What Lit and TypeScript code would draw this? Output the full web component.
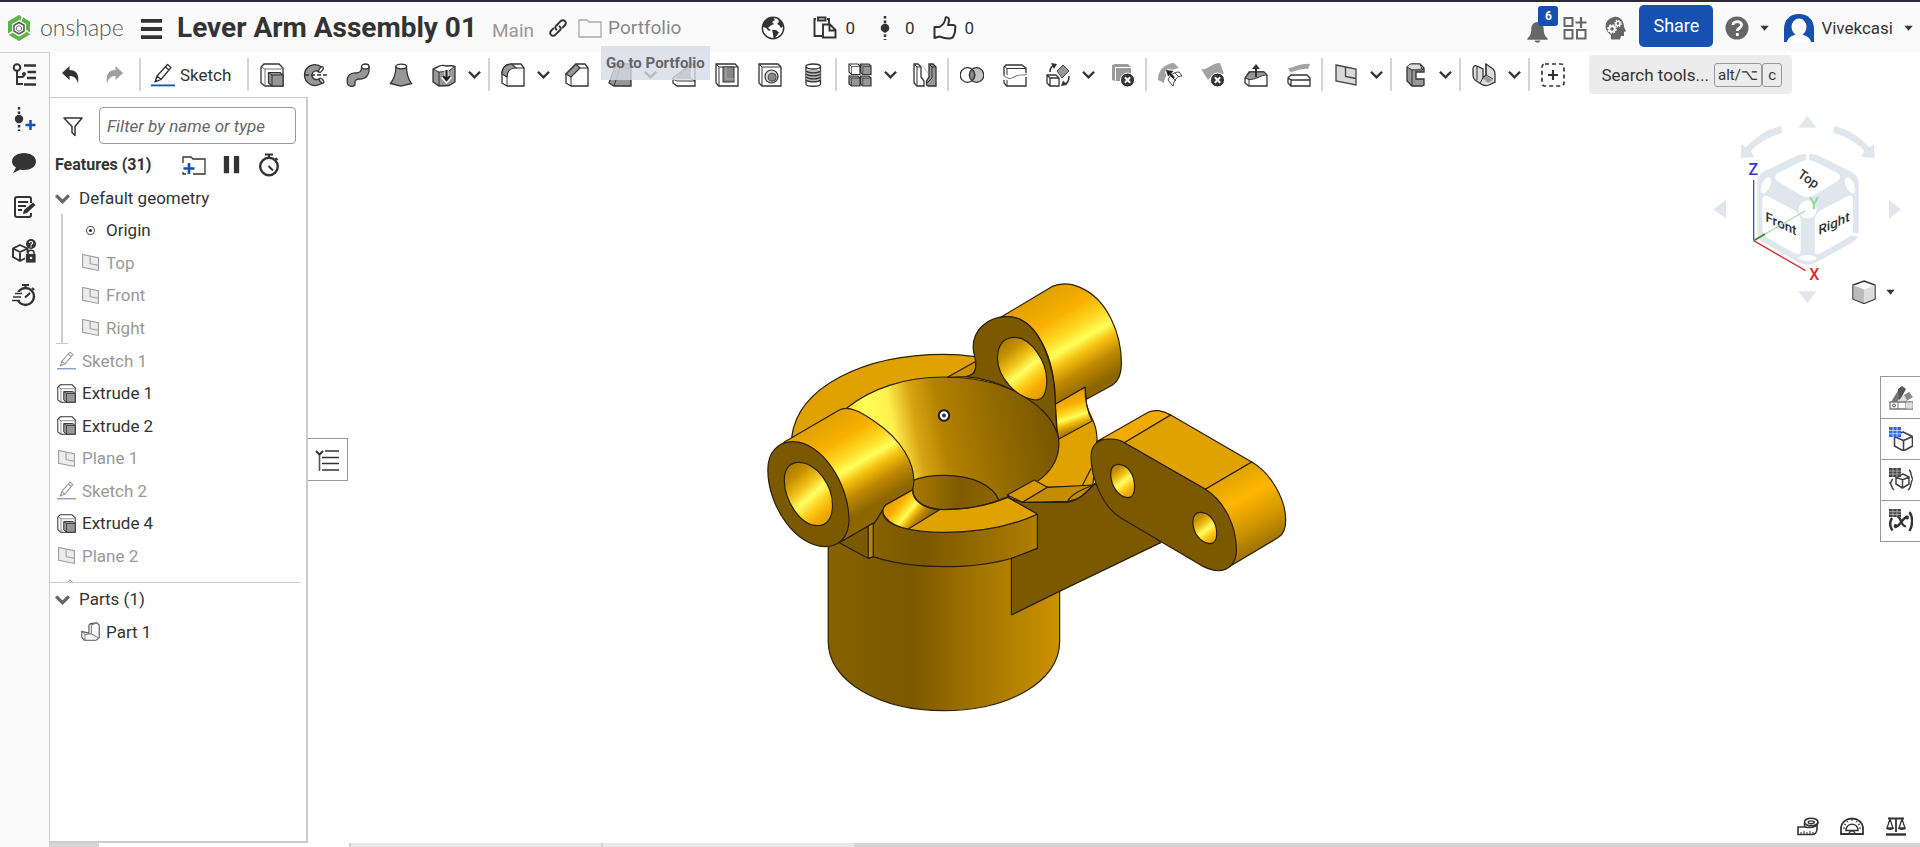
import { LitElement, html, svg, css, type TemplateResult } from "lit";
import { customElement, property } from "lit/decorators.js";
import { classMap } from "lit/directives/class-map.js";

const G = "#979797";
const K = "#333";

const plane = (stroke: string, fill: string) => svg`
  <path d="M2 2 L22 6 V22 L2 18Z" fill=${fill} stroke=${stroke} stroke-width="1.3"/>
  <path d="M11.5 4 V13.500 L22 15.500" fill="none" stroke=${stroke} stroke-width="1.3"/>`;

const pencil = (stroke: string, line: string) => svg`
  <path d="M4 19 L6 13 L16.500 1.500 L20 4.500 L10 16.500Z M6 13 L10 16.500 M14.500 4 L18 7" fill="#fff" stroke=${stroke} stroke-width="1.3" stroke-linejoin="round"/>
  <path d="M4 19 L5 16.200 L6.700 17.700Z" fill=${stroke}/>
  <rect x="0" y="21.500" width="24" height="1.800" fill=${line}/>`;

const ICONS: Record<string, TemplateResult> = {
  undo: svg`<path d="M3 10 L10.500 3 V7 C17 7 20.500 11 19 20.500 C17.500 15 15 13 10.500 13 V17Z" fill="#333"/>`,
  redo: svg`<path d="M21 10 L13.500 3 V7 C7 7 3.500 11 5 20.500 C6.500 15 9 13 13.500 13 V17Z" fill="#a0a0a0"/>`,
  sketch: pencil(K, "#164fae"),
  sketchDim: pencil("#999", "#8d9cc4"),
  plane: plane("#444", "#d9d9d9"),
  planeDim: plane("#999", "#ececec"),
  extrude: svg`<path d="M1 4 L4 1 H19 L23 5 V23 H5 L1 20Z" fill="#fff" stroke="#333" stroke-width="1.3"/>
    <path d="M1.500 4 L5 6 V23 M5 6 H21 L23 5" fill="none" stroke="#777" stroke-width="1"/>
    <path d="M8.500 9.500 H20 L23 12 V23 H12 L8.500 20Z" fill=${G} stroke="#333" stroke-width="1.200"/>
    <path d="M8.500 9.500 L12 12 H23 M12 12 V23" fill="none" stroke="#333" stroke-width="1"/>`,
  revolve: svg`<path d="M19 4.500 C12 -1.500 1.500 3 1.500 12 C1.500 21 12 26 20 19.500 L16.500 15.500 C13 18 9 16 9 12 C9 8.500 13 6.500 15.500 9Z" fill=${G} stroke="#333" stroke-width="1.300"/>
    <ellipse cx="18" cy="6.500" rx="3.200" ry="1.600" transform="rotate(-55 18 6.500)" fill="#fff" stroke="#333" stroke-width="1.200"/>
    <ellipse cx="18.500" cy="17.700" rx="3" ry="1.600" transform="rotate(50 18.500 17.700)" fill="#ccc" stroke="#333" stroke-width="1.200"/>
    <path d="M2 12 H24" stroke="#333" stroke-width="1.400" stroke-dasharray="4 2"/>`,
  sweep: svg`<path d="M1.500 21 C0 13 4 9.500 10 10 C14 10 16 8 15.500 3.500 L23 3.500 C24 12 20 16.500 13 16 C10 16 8.500 18 9 22 C7 24 3 24 1.500 21Z" fill=${G} stroke="#333" stroke-width="1.300"/>
    <ellipse cx="19.300" cy="3.500" rx="3.700" ry="2.500" fill="#fff" stroke="#333" stroke-width="1.300"/>`,
  loft: svg`<path d="M7 3.500 C7 12 5 16 1.500 20.500 L12 23.200 L22.500 20.500 C19 16 17.500 12 17.500 3.500Z" fill=${G} stroke="#333" stroke-width="1.300"/>
    <ellipse cx="12.200" cy="3.500" rx="5.300" ry="2.300" fill="#fff" stroke="#333" stroke-width="1.300"/>`,
  thicken: svg`<path d="M1 6 C6 4 8 1.500 12 2.500 C16 4 19 1.500 23 3.500 V19 L17 22.500 L7 23 L1 19Z" fill=${G} stroke="#333" stroke-width="1.300"/>
    <path d="M1.500 6.200 C7 4 9 1.500 12 2.800 C16 4 18 2 22.500 3.600 L17 8 C13 8 10 9 7 9Z" fill="#fff" stroke="#333"/>
    <path d="M7 9 V23" stroke="#333" stroke-width="1"/>
    <path d="M14.500 7 V17 M10.500 13.500 L14.500 18 L18.500 13.500" fill="none" stroke="#fff" stroke-width="4"/>
    <path d="M14.500 7 V16 M11 13 L14.500 17 L18 13" fill="none" stroke="#222" stroke-width="2.200"/>`,
  fillet: svg`<path d="M1 11 C1 4 5 1 11 1 H20 L23 5 V23 H6 L1 20Z" fill="#fff" stroke="#333" stroke-width="1.300"/>
    <path d="M1 11 C1 4 5 1 11 1 L15 5 C9 5 6 8.500 6 14Z" fill=${G} stroke="#333" stroke-width="1.200"/>
    <path d="M6 13 V23 M15 5 H23" stroke="#333" stroke-width="1" fill="none"/>`,
  chamfer: svg`<path d="M1 11 L11 1 H20 L23 5 V23 H6 L1 20Z" fill="#fff" stroke="#333" stroke-width="1.300"/>
    <path d="M1 11 L11 1 L15 5 L6 14Z" fill=${G} stroke="#333" stroke-width="1.200"/>
    <path d="M6 13 V23 M15 5 H23" stroke="#333" stroke-width="1" fill="none"/>`,
  draft: svg`<path d="M8 1 H23 V23 H6 L1 20Z" fill=${G} stroke="#333" stroke-width="1.300"/><path d="M8 1 L12 5 L6 23 M12 5 H23" stroke="#333" fill="none"/>`,
  rib: svg`<path d="M20 1 L23 4 V23 H5 L1 20 V15 L18 2Z" fill="#fff" stroke="#333" stroke-width="1.300"/>
    <path d="M18 3 V15 H4Z" fill=${G} stroke="#555"/><path d="M1 16 L5 18 H23 M18 15 L23 18" fill="none" stroke="#333"/>`,
  shell: svg`<path d="M1 1 H20 L23 4 V23 H4 L1 20Z" fill="#fff" stroke="#333" stroke-width="1.300"/>
    <path d="M1 1 L4 4 H23 M4 4 V23" fill="none" stroke="#333"/><rect x="8" y="4" width="11" height="15" fill="#888" stroke="#333"/><path d="M11 4 V16 H19" fill="none" stroke="#aaa" stroke-width="1"/>`,
  hole: svg`<path d="M1 1 H20 L23 4 V23 H4 L1 20Z" fill="#fff" stroke="#333" stroke-width="1.300"/>
    <path d="M1 1 L4 4 H23 M4 4 V23" fill="none" stroke="#333"/><circle cx="13.500" cy="13.500" r="6.500" fill="#ddd" stroke="#333" stroke-width="1.200"/><circle cx="14.200" cy="14.200" r="4" fill="#888" stroke="#444"/>`,
  thread: svg`<path d="M5 4 V21 C5 24 19.500 24 19.500 21 V4Z" fill="#fff" stroke="#333" stroke-width="1.300"/>
    <path d="M5 7 V17 C8 19.500 17 19.500 19.500 17 V7Z" fill="#bbb"/>
    <ellipse cx="12.200" cy="3.500" rx="7.300" ry="2.500" fill="#fff" stroke="#333" stroke-width="1.300"/>
    <path d="M5 8 C8 10.500 17 10.500 19.500 8 M5 11 C8 13.500 17 13.500 19.500 11 M5 14 C8 16.500 17 16.500 19.500 14 M5 17 C8 19.500 17 19.500 19.500 17" fill="none" stroke="#333" stroke-width="1.400"/>`,
  pattern: svg`<g stroke="#333" stroke-width="1.200"><path d="M1 1 H10 L12 3 V11.500 H3.500 L1 9Z" fill="#fff"/><path d="M12.500 1 H21 L23 3 V11.500 H14.500 L12.500 9Z" fill=${G}/>
    <path d="M1 13 H10 L12 15 V23 H3.500 L1 21Z" fill=${G}/><path d="M12.500 13 H21 L23 15 V23 H14.500 L12.500 21Z" fill=${G}/></g>
    <path d="M1 1 L3.500 3.500 H12 M3.500 3.500 V11 M12.500 1 L14.800 3.500 H23 M14.800 3.500 V11 M1 13 L3.500 15.200 H12 M3.500 15 V23 M12.500 13 L14.800 15.200 H23 M14.800 15 V23" fill="none" stroke="#444" stroke-width=".8"/>`,
  mirror: svg`<path d="M1 1 H5 L8 4 V14 L11 18 V23 H4 L1 20Z" fill="#fff" stroke="#333" stroke-width="1.300"/><path d="M1 1 L4 4 V23 M4 4 H8" fill="none" stroke="#333"/>
    <path d="M23 4 L20 1 H16 V14 L13.500 18 V22 L15 23 H23Z" fill=${G} stroke="#333" stroke-width="1.300"/><path d="M16 1 L19 4 H23 M19 4 V15 L14 20" fill="none" stroke="#333"/><path d="M9 2 L15 10" stroke="#bbb"/>`,
  boolean: svg`<circle cx="16.500" cy="12" r="7.300" fill="#c4c4c4" stroke="#333" stroke-width="1.300"/><circle cx="7.500" cy="12" r="7.300" fill="#fff" stroke="#333" stroke-width="1.300"/>
    <path d="M12 6.300 A7.300 7.300 0 0 1 12 17.700 A7.300 7.300 0 0 1 12 6.300Z" fill="#8a8a8a" stroke="#333" stroke-width="1.300"/>`,
  split: svg`<path d="M1 12 V4 L3 2 H19 L23 5 V10 M23 14 V23 H4 L1 20 V17" fill="none" stroke="#333" stroke-width="1.300"/><path d="M1 3 L4 5.500 H23 M4 5.500 V12 M4 17 V23" fill="none" stroke="#333"/>
    <path d="M0 12 C6 18 9 15 13 13 C17 11 19 13 24 11" fill="none" stroke="#888" stroke-width="1.200"/>`,
  transform: svg`<path d="M1 12 H10 L13 15 V23 H4 L1 20Z M1 12 L4 15 H13 M4 15 V23" fill="#fff" stroke="#333" stroke-width="1.300"/>
    <path d="M11 8 L17 2 L23 8 L16 15Z" fill=${G} stroke="#444"/><path d="M4 9 C4 5 5 3 9 2" fill="none" stroke="#333" stroke-width="1.600"/><path d="M5 0 L11 1 L8 6Z" fill="#333"/>
    <path d="M23 13 C23 17 22 20 19 21" fill="none" stroke="#333" stroke-width="1.600"/><path d="M15 23 L17 17.500 L21 22Z" fill="#333"/>`,
  deletePart: svg`<path d="M1 2 L4 1 H17 L20 4 V18 H4 L1 17Z" fill="#9a9a9a"/><path d="M4.500 4.500 H20 M4.500 4.500 V19" stroke="#fff" fill="none"/>
    <circle cx="16.500" cy="17" r="7" fill="#333" stroke="#fff"/><path d="M13.800 14.300 L19.200 19.700 M19.200 14.300 L13.800 19.700" stroke="#fff" stroke-width="2"/>`,
  modFillet: svg`<path d="M0 17 C0 7 6 1 16 0 L21 5 C13 6 7 11 6 20Z" fill="#a3a3a3"/><path d="M10 9 L18 16 M9 8 L16 9 M9 8 L11 15" stroke="#fff" stroke-width="4"/>
    <path d="M10 17 C12 12 16 9 21 9 L24 13 C19 13 16 17 15 23Z M13 13 L18 18 M17 10 L21 14" fill="#fff" stroke="#444" stroke-width="1"/>
    <path d="M8 7 L15.500 8 L10 13.500Z" fill="#222"/><path d="M11 10 L16 15" stroke="#222" stroke-width="2.400"/>`,
  deleteFace: svg`<path d="M0 6 C6 8 10 0 19 0 L23 11 C16 10 10 13 7 17Z" fill="#a3a3a3"/><circle cx="16.500" cy="17" r="7" fill="#333" stroke="#fff"/><path d="M13.800 14.300 L19.200 19.700 M19.200 14.300 L13.800 19.700" stroke="#fff" stroke-width="2"/>`,
  moveFace: svg`<path d="M1 15 L5 9 H20 L23 12 V23 H5 L1 20Z" fill="#fff" stroke="#333" stroke-width="1.300"/><path d="M1 15 L6 9 H20 L23 12 C16 12 12 17 5 16.500Z" fill=${G} stroke="#333"/><path d="M5 16 V23" stroke="#333"/>
    <path d="M12 14 V4" stroke="#333" stroke-width="2"/><path d="M8 6 L12 1 L16 6Z" fill="#333"/>`,
  replaceFace: svg`<path d="M1 5 C8 5 12 0 23 1 L21 6 C14 5 8 9 3 9Z" fill="#a3a3a3"/><path d="M1 15 L4 12 H20 L23 15 V23 H4 L1 20Z M1 15 L4 17 H23 M4 17 V23" fill="#fff" stroke="#333" stroke-width="1.300"/>`,
  frame: svg`<path d="M4 4 L8 1 H17 L21 5 V9 H13 V16 H21 V22 L19 23 H9 L4 18Z" fill=${G} stroke="#333" stroke-width="1.300"/><path d="M4 4 L7.500 1.500 H17 L20 5 L9 6.500Z" fill="#ddd"/><path d="M4 4 L9 7 H19 L21 5 M9 7 V23 M17 1 L19 6" fill="none" stroke="#333"/>`,
  sheet: svg`<path d="M1 6 C1 3 3 2 5 3 L11 6 V15 L14 12 V1 L21 6 C23 8 23 9 23 11 V19 L17 22 C14 23 12 23 9 21 L3 17 C1 15 1 14 1 12Z" fill="#dcdcdc" stroke="#333" stroke-width="1.300"/>
    <path d="M11 15 L8 20 M14 12 L21 16 M14 1 V12 M5 3 V17" fill="none" stroke="#333"/><path d="M11 15 L14 13 L21 17 L16 20Z" fill="#999"/>`,
  custom: svg`<rect x="1" y="1" width="22" height="22" rx="3" fill="none" stroke="#333" stroke-width="1.700" stroke-dasharray="4 3"/><path d="M12 7 V17 M7 12 H17" stroke="#333" stroke-width="2.200"/>`,
  chevron: svg`<path d="M5 8.500 L12 15.500 L19 8.500" fill="none" stroke="#333" stroke-width="3"/>`,
  caret: svg`<path d="M3 6 H21 L12 17Z" fill="#333"/>`,
  tree: svg`<circle cx="5" cy="4.500" r="3.300" fill="none" stroke="#333" stroke-width="2"/><path d="M5 8 V21 H11 M5 14 H10 C12 14 12 12 12 11" fill="none" stroke="#333" stroke-width="2"/><circle cx="12" cy="11" r="2" fill="#333"/>
    <path d="M12 2.500 H24 M15.500 9 H24 M15 15 H24 M12 21.500 H24" stroke="#333" stroke-width="2.400"/>`,
  versionAdd: svg`<path d="M7 0 V24" stroke="#333" stroke-width="2.500" stroke-dasharray="2.500 2"/><circle cx="7" cy="12" r="4.200" fill="#333"/><path d="M18.500 13 V23 M13.500 18 H23.500" stroke="#164fae" stroke-width="2.500"/>`,
  comment: svg`<path d="M12 2 C18.500 2 24 5.500 24 10.500 C24 15.500 18.500 19 12 19 C10.500 19 9.500 19 8.500 18.500 L1 22 L4 16.500 C1.500 15 0 13 0 10.500 C0 5.500 5.500 2 12 2Z" fill="#333"/>`,
  notes: svg`<path d="M19 8 V4 C19 2.500 18.500 2 17 2 H5 C3.500 2 3 2.500 3 4 V20 C3 21.500 3.500 22 5 22 H17 C18.500 22 19 21.500 19 20 V18" fill="none" stroke="#333" stroke-width="2"/><path d="M6 7 H16 M6 11 H14 M6 15 H10" stroke="#333" stroke-width="1.800"/><path d="M11 19 L12 15 L21 7.500 L23.500 10 L15 18Z" fill="#333"/>`,
  boxLock: svg`<path d="M8 6 L15.500 9.500 V18 L8 22 L1 18 V9.500Z M1 9.500 L8 13 L15.500 9.500 M8 13 V22" fill="none" stroke="#333" stroke-width="1.900"/><circle cx="19" cy="5" r="5" fill="#333"/>
    <path d="M17.300 4 C17.300 2 20.700 2 20.700 4 C20.700 5 19 5.200 19 6.500 M19 7.200 V8.500" fill="none" stroke="#fff" stroke-width="1.200"/><path d="M13.500 14.500 H24 V24 H13.500Z" fill="#333" stroke="#fafafa" stroke-width=".8"/><path d="M16 15 V13.500 C16 10.500 22 10.500 22 13.500 V15" fill="none" stroke="#333" stroke-width="1.500"/><circle cx="19" cy="19" r="1.300" fill="#fff"/>`,
  stopwatchFast: svg`<circle cx="13.500" cy="13.500" r="8.500" fill="none" stroke="#333" stroke-width="2.400"/><rect x="0" y="9" width="8" height="9" fill="#fafafa"/><path d="M3 10.500 H10 M1 14 H9 M0 17.500 H8" stroke="#333" stroke-width="1.500"/><path d="M10 2 H17 M13.500 2 V5 M20 5 L22 7 M13 14.500 L18 10" stroke="#333" stroke-width="2.200"/>`,
  stopwatch: svg`<circle cx="12" cy="13.500" r="8.800" fill="none" stroke="#333" stroke-width="2.400"/><path d="M8 1.500 H16 M12 1 V5 M18.500 5 L20.500 7 M11.500 13 L16 17.500" stroke="#333" stroke-width="2"/>`,
  funnel: svg`<path d="M3 4 H21 L14 12.500 V21.500 L11 18.500 V12.500Z" fill="#fff" stroke="#333" stroke-width="1.500" stroke-linejoin="round"/>`,
  folderAdd: svg`<path d="M1 10 V4 H9 L11 6 H23 V21 H11 M1 19 V21 H4" fill="none" stroke="#333" stroke-width="1.300"/><path d="M7 10 V21 M1.500 15.500 H12.500" stroke="#164fae" stroke-width="2.600"/>`,
  pause: svg`<path d="M4 3 H9.500 V21 H4Z M14.500 3 H20 V21 H14.500Z" fill="#333"/>`,
  expand: svg`<path d="M3 7.500 L12 16.500 L21 7.500" fill="none" stroke="#666" stroke-width="4.500"/>`,
  origin: svg`<circle cx="12" cy="12" r="5" fill="none" stroke="#555" stroke-width="1.300"/><circle cx="12" cy="12" r="2" fill="#333"/>`,
  part: svg`<path d="M12 2 L20 1 L23 4 V20 L19 23 H4 L1 19 V12 L10 14 V4Z" fill="#fff" stroke="#555" stroke-width="1.400"/><path d="M1 12 L5 15.500 V23 M5 15.500 L13 15 V4 L12 2 M13 4 L20 1 M13 15 L22 20" fill="none" stroke="#666" stroke-width="1.200"/>`,
  menu: svg`<path d="M1 4 H23 M1 12.500 H23 M1 21 H23" stroke="#333" stroke-width="4"/>`,
  link: svg`<g fill="none" stroke="#333" stroke-width="2.300" stroke-linecap="round"><path d="M10 14 C8 12 8.500 10.500 10 9 L15 4 C19 0.500 23.500 5 20 9 L17.500 11.500"/><path d="M14 10 C16 12 15.500 13.500 14 15 L9 20 C5 23.500 0.500 19 4 15 L6.500 12.500"/></g>`,
  folder: svg`<path d="M1 4 H9 L11 6 H23 V21 H1Z" fill="none" stroke="#aaa" stroke-width="1.300"/>`,
  globe: svg`<circle cx="12" cy="12" r="10.700" fill="#fff" stroke="#333" stroke-width="1.500"/><path d="M2 8 C4 4 8 1.500 12 1.500 L14 4 L11 6 L13 8 L9 10 L7 12 L10 14 L8 15 L5 12 L2 11Z M11 14 L15 14 L18 16.500 L14 22 L12.500 22 L12 18Z M17 3 L20 5 L22.500 10 L20 12 L18 9 L16 8 L18 6Z" fill="#333"/>`,
  copies: svg`<path d="M3 3 H1.500 V20 H9 M16 8 V3 H14 M5 1.500 H12.500 V4.500 H5Z" fill="none" stroke="#333" stroke-width="1.900"/><path d="M10 8.500 H17 L22.500 14 V21.500 H10Z M16.500 9 V14.500 H22" fill="#fafafa" stroke="#333" stroke-width="1.900"/>`,
  version: svg`<path d="M12 0 V24" stroke="#333" stroke-width="2.600" stroke-dasharray="2.600 2"/><circle cx="12" cy="12" r="4.300" fill="#333"/>`,
  thumb: svg`<path d="M1.500 11 H6.500 C10 9 12 6 12.500 2 C13 0.500 16 1 16 4 C16 6 15.500 7.500 15 9 H20 C22.500 9 23 11 22 13 C22.500 15 21.500 18 20.500 20 C20 22 18 22.500 16 22.500 C12 22.500 9 21.500 6.500 20.500 L1.500 22Z" fill="none" stroke="#333" stroke-width="2" stroke-linejoin="round"/>`,
  bell: svg`<path d="M12 2 C7 2 5.500 6 5.500 10 C5.500 15 4 17 1.500 19 V20.500 H22.500 V19 C20 17 18.500 15 18.500 10 C18.500 6 17 2 12 2Z M9 21.500 H15 C15 24.500 9 24.500 9 21.500Z" fill="#666"/>`,
  apps: svg`<path d="M1.500 2 H9.500 V10 H1.500Z M1.500 14 H9.500 V22.500 H1.500Z M14 14 H22.500 V22.500 H14Z" fill="none" stroke="#666" stroke-width="2"/><path d="M18 1 V12 M12.500 6.500 H23.500" stroke="#666" stroke-width="2.200"/>`,
  head: svg`<path d="M11 1 C17 0 21 5 21 11 L23 15 L21 16 V20 H18 L17 23.500 H8 V19 C0 14 1 3 11 1Z" fill="#666"/><circle cx="9" cy="13" r="2.800" fill="none" stroke="#fff" stroke-width="2"/><circle cx="9" cy="13" r="4" fill="none" stroke="#fff" stroke-width="1.600" stroke-dasharray="1.600 1.540"/><circle cx="15" cy="7.500" r="2.100" fill="none" stroke="#fff" stroke-width="1.500"/><circle cx="15" cy="7.500" r="3.200" fill="none" stroke="#fff" stroke-width="1.300" stroke-dasharray="1.200 1.300"/>`,
  help: svg`<circle cx="12" cy="12" r="11.500" fill="#666"/><path d="M8 9 C8 4.500 16.500 4.500 16.500 9 C16.500 12 12.300 12 12.300 15 M12.300 17 V20" fill="none" stroke="#fff" stroke-width="2.800"/>`,
  flyout: svg`<path d="M1 3 L4.500 6.500 L8 3" fill="none" stroke="#333" stroke-width="2"/><path d="M4.500 7 V23" stroke="#555" stroke-width="1.600"/><path d="M10 3 H24 M7 9.500 H24 M7 15.500 H24 M7 22 H24" stroke="#333" stroke-width="1.600"/>`,
  appearance: svg`<path d="M2 16 L10 3 L14 6 L7 18Z" fill="#777"/><path d="M9 3 L13 0 L17 3 L10 16Z" fill="#555"/><path d="M15 9 L20 6 L24 11 L14 17Z" fill="#888"/><path d="M9 15 L15 9 L18 14 L12 18Z" fill="#ddd"/>
    <path d="M1 16 H24 V23 H1Z" fill="#fff" stroke="#777" stroke-width="1.300"/><path d="M9 16 V23 M17 16 V23" stroke="#777"/><path d="M17 16.500 H23.500 V22.500 H17Z" fill="#ddd"/><circle cx="5" cy="19.500" r="1.500" fill="none" stroke="#555"/>`,
  tableBlue: svg`<path d="M14 5 L23.500 9.500 V19 L14.500 24 L5.500 19 V9Z M5.500 9.500 L14.500 13.500 L23.500 9.500 M14.500 13.500 V24" fill="#fff" stroke="#444" stroke-width="1.600"/><path d="M0 0 H12 V10 H0Z" fill="#2b6fd6"/><path d="M4 0 V10 M8 0 V10 M0 3.500 H12 M0 6.700 H12" stroke="#cfe0ff" stroke-width=".8"/>`,
  tableBrace: svg`<path d="M14 6 L20 9 V16 L13.500 20 L7 16 V9Z M7 9 L13.500 12 L20 9 M13.500 12 V20" fill="#fff" stroke="#444" stroke-width="1.500"/><path d="M4 11 C2 12 3 14 1 15 C3 16 2 20 5 22 M20 2 C23 3 21 9 24 11 C21 13 23 20 19 22" fill="none" stroke="#444" stroke-width="1.500"/><path d="M0 0 H12 V9 H0Z" fill="#444"/><path d="M4 0 V9 M8 0 V9 M0 3 H12 M0 6 H12" stroke="#bbb" stroke-width=".8"/>`,
  tableVar: svg`<path d="M3 9 C0.500 13 1 18 3.500 21.500 M20.500 3 C24 8 24 16 20.500 22" fill="none" stroke="#333" stroke-width="2.400"/><path d="M8 8 C12 6 12 19 17 17 M18 8 C14 8 11 18 6 18" fill="none" stroke="#333" stroke-width="2.400"/><circle cx="18" cy="8.500" r="1.900" fill="#333"/><circle cx="6.500" cy="17" r="1.900" fill="#333"/><path d="M0 0 H12 V8 H0Z" fill="#444"/><path d="M4 0 V8 M8 0 V8 M0 2.700 H12 M0 5.400 H12" stroke="#bbb" stroke-width=".8"/>`,
  shaded: svg`<path d="M12 1 L23 5 V19 L12 23.500 L1 19 V5Z" fill="#fff" stroke="#333" stroke-width="1.400"/><path d="M1.500 5.300 L12 9.500 V23 L1.500 19Z" fill="#bbb"/><path d="M12 9.500 L22.500 5.300 V18.700 L12 23Z" fill="#ddd"/>`,
  tape: svg`<path d="M2 13 H12 L21 9 V15 C21 18 19 20.500 16 20.500 H2Z" fill="#fff" stroke="#333" stroke-width="1.600"/><path d="M8.500 9 V12 C9 13 10 13.500 12 13.500 C18 13.500 22 12 22 8" fill="#fff" stroke="#333" stroke-width="1.600"/><ellipse cx="15.200" cy="8" rx="6.700" ry="3.800" fill="#fff" stroke="#333" stroke-width="1.600"/><ellipse cx="15.200" cy="8.300" rx="3" ry="1.400" fill="none" stroke="#333" stroke-width="1.400"/><path d="M5 20 V18 M8 20 V17 M11 20 V18 M14 20 V17 M17 20 V18" stroke="#333" stroke-width="1"/>`,
  protractor: svg`<path d="M1 20 V15 C1 1 23 1 23 15 V20Z" fill="#fff" stroke="#333" stroke-width="1.800"/><path d="M6 16.500 C6 8 18 8 18 16.500Z" fill="none" stroke="#333" stroke-width="1.500"/><path d="M9 19.500 C10 16 14 16 15 19.500" fill="none" stroke="#333" stroke-width="1.300"/><path d="M3 14 H5 M4 10 L6 11 M7 7 L8 8.500 M12 5 V7 M17 7 L16 8.500 M20 10 L18 11 M21 14 H19" stroke="#333"/>`,
  scales: svg`<path d="M4 4.500 H20 M12 3.500 V18" stroke="#333" stroke-width="1.800"/><path d="M2 20.500 H22" stroke="#333" stroke-width="2.400"/><path d="M6 5 L3 14 H9Z M18 5 L15 14 H21Z" fill="none" stroke="#333" stroke-width="1.300"/><path d="M2 14 H10 C10 16.500 2 16.500 2 14Z M14 14 H22 C22 16.500 14 16.500 14 14Z" fill="#333"/>`,
};

@customElement("cad-icon")
export class CadIcon extends LitElement {
  @property() name = "";
  @property({ type: Number }) size = 24;
  static styles = css`
    :host { display: inline-flex; flex: none; }
    svg { display: block; }
  `;
  render() {
    return html`<svg width=${this.size} height=${this.size} viewBox="0 0 24 24" aria-hidden="true">${ICONS[this.name]}</svg>`;
  }
}

@customElement("part-model")
export class PartModel extends LitElement {
  static styles = css`
    :host { display: block; }
    svg { display: block; }
    .edges * { vector-effect: non-scaling-stroke; }
    .edges { stroke: #2b2000; stroke-width: 1.2; stroke-linejoin: round; fill: none; }
    .flat { fill: #e0a200; }
    .dark { fill: #7b5900; }
  `;
  private tube(id: string, x: number, y: number, dx: number, dy: number) {
    return svg`<linearGradient id=${id} gradientUnits="userSpaceOnUse" x1=${x} y1=${y} x2=${x + dx} y2=${y + dy}>
      <stop offset="0" stop-color="#dda000"/><stop offset=".28" stop-color="#f9b000"/><stop offset=".46" stop-color="#ffdc28"/>
      <stop offset=".57" stop-color="#ffff5a"/><stop offset=".68" stop-color="#f5c010"/><stop offset=".82" stop-color="#c08a00"/><stop offset="1" stop-color="#8d6600"/>
    </linearGradient>`;
  }
  private bore(id: string, x: number, y: number, dx: number, dy: number) {
    return svg`<linearGradient id=${id} gradientUnits="userSpaceOnUse" x1=${x} y1=${y} x2=${x + dx} y2=${y + dy}>
      <stop offset="0" stop-color="#a87a00"/><stop offset=".2" stop-color="#c89000"/><stop offset=".4" stop-color="#f3c61c"/>
      <stop offset=".55" stop-color="#ffff66"/><stop offset=".7" stop-color="#ffd020"/><stop offset=".85" stop-color="#f4ac00"/><stop offset="1" stop-color="#dda000"/>
    </linearGradient>`;
  }
  render() {
    return html`<svg width="560" height="460" viewBox="0 0 560 460" role="img" aria-label="Lever arm part">
      <defs>
        ${this.tube("bossL", 170, 460, 160, 256)}
        ${this.tube("bossR", 740, 110, 170, 272)}
        ${this.tube("filL", 385, 690, 95, 75)}
        ${this.tube("filR", 880, 370, 45, 125)}
        ${this.bore("boreL", 90, 600, 140, 150)}
        ${this.bore("boreR", 695, 220, 130, 150)}
        ${this.bore("pin1", 1005, 590, 70, 85)}
        ${this.bore("pin2", 1235, 735, 70, 85)}
        <linearGradient id="linkEnd" gradientUnits="userSpaceOnUse" x1="1340" y1="610" x2="1480" y2="850">
          <stop offset="0" stop-color="#e0a200"/><stop offset=".3" stop-color="#ffb600"/><stop offset=".6" stop-color="#d29600"/><stop offset="1" stop-color="#856100"/>
        </linearGradient>
        <linearGradient id="barrel" gradientUnits="userSpaceOnUse" x1="219" y1="0" x2="867" y2="0">
          <stop offset="0" stop-color="#876200"/><stop offset=".35" stop-color="#7a5800"/><stop offset=".6" stop-color="#9c7000"/><stop offset="1" stop-color="#cc9300"/>
        </linearGradient>
        <linearGradient id="band" gradientUnits="userSpaceOnUse" x1="345" y1="0" x2="805" y2="0">
          <stop offset="0" stop-color="#876200"/><stop offset=".3" stop-color="#7a5800"/><stop offset="1" stop-color="#b07e00"/>
        </linearGradient>
        <linearGradient id="cone" gradientUnits="userSpaceOnUse" x1="270" y1="480" x2="850" y2="380">
          <stop offset="0" stop-color="#ffd020"/><stop offset=".1" stop-color="#ffff5a"/><stop offset=".22" stop-color="#fff04c"/><stop offset=".33" stop-color="#d8a414"/><stop offset=".45" stop-color="#b48200"/>
          <stop offset=".7" stop-color="#946b00"/><stop offset="1" stop-color="#765500"/>
        </linearGradient>
        <linearGradient id="floor" gradientUnits="userSpaceOnUse" x1="455" y1="0" x2="697" y2="0">
          <stop offset="0" stop-color="#a87a00"/><stop offset=".55" stop-color="#7e5b00"/><stop offset="1" stop-color="#8e6700"/>
        </linearGradient>
      </defs>
      <g class="edges" transform="scale(0.35714 0.33333)">
        <path fill="url(#barrel)" d="M219 810 V1115 C219 1235 365 1322 543 1322 C722 1322 867 1235 867 1115 V800Z"/>
        <path class="flat" d="M117 500 C135 350 320 253 543 253 C575 253 605 256 630 260 L938 352 C938 450 972 430 972 520 L960 645 L720 682 L440 640Z"/>
        <path fill="url(#cone)" d="M272 413 C340 355 435 321 543 321 C720 321 865 410 865 520 C865 600 805 650 697 690 L543 719 C500 719 450 690 440 640Z"/>
        <path fill="url(#floor)" d="M455 632 C480 620 510 616 545 616 C620 616 680 645 697 691 C650 710 600 719 543 719 C490 715 455 695 455 660Z"/>
        <path fill="#c99100" d="M553 322 L630 275 C637 300 625 316 605 320Z"/>
        <path fill="url(#bossR)" d="M700 143 L845 50 C870 38 900 40 930 55 C1000 90 1040 190 1040 280 C1040 315 1030 335 1015 345 L942 388 L938 352 L855 403 C855 260 800 140 720 140Z"/>
        <path class="dark" d="M632 290 C635 265 625 260 625 230 C625 185 660 140 720 140 C800 140 852 260 855 403 L860 490 C845 440 810 405 745 365 C705 343 660 325 605 320 C630 312 632 305 632 290Z"/>
        <path fill="url(#boreR)" d="M693 265 C693 225 710 202 740 202 C790 202 831 280 831 330 C831 370 820 390 800 390 C745 385 693 320 693 265Z"/>
        <path fill="url(#filR)" d="M855 403 L938 352 C938 380 940 415 958 453 L865 507 L860 480Z"/>
        <path d="M805 640 L833 652 L930 648 L955 595"/>
        <path fill="url(#bossL)" d="M95 517 L250 420 C275 405 310 425 350 455 C420 505 465 580 458 645 L455 660 L380 705 C370 715 372 735 350 757 L250 818 L150 640Z"/>
        <path class="dark" d="M50 600 C50 545 80 515 120 515 C200 515 277 640 277 750 C277 800 250 830 210 830 C130 830 50 710 50 600Z"/>
        <path fill="url(#boreL)" d="M96 630 C96 598 110 577 137 577 C185 577 231 645 231 705 C231 745 215 767 190 767 C140 767 96 690 96 630Z"/>
        <path class="dark" d="M250 818 L350 757 L372 720 L375 800 L345 860 L330 865Z"/>
        <path fill="url(#band)" d="M372 720 C375 765 440 787 543 787 C650 787 740 765 805 732 V835 C740 870 650 890 543 890 C470 890 400 880 345 860 V765Z"/>
        <path fill="#b88500" d="M331 768 L345 760 V860 L331 865Z"/>
        <path class="flat" d="M455 660 C460 695 490 719 543 719 C610 719 670 705 722 682 L805 732 C740 765 650 787 543 787 C480 787 372 775 372 725 L380 705Z"/>
        <path fill="url(#filL)" d="M455 660 L380 705 C360 725 380 765 443 777 L530 720 C490 715 455 695 455 660Z"/>
        <path class="dark" d="M722 682 L763 697 H890 C925 690 945 665 965 640 L1150 818 L865 965 L732 1035 V865 L805 835 V732Z"/>
        <path fill="#d89a00" d="M720 675 L796 630 L833 652 L763 697Z"/>
        <path fill="#c48d00" d="M763 697 L833 652 L962 645 C940 665 925 690 890 694Z"/>
        <path d="M890 694 C895 675 935 655 962 645"/>
        <path fill="#f0aa00" d="M970 515 L1115 427 C1130 418 1155 420 1178 435 L1048 518 C1020 505 990 505 970 515Z"/>
        <path class="flat" d="M1048 518 L1178 435 L1405 576 L1275 658Z"/>
        <path fill="url(#linkEnd)" d="M1275 658 L1405 576 C1460 610 1500 690 1500 750 C1500 780 1490 795 1480 802 L1330 898Z"/>
        <path class="dark" d="M955 560 C955 525 975 507 1010 507 C1025 507 1040 512 1048 518 L1275 658 C1330 695 1362 770 1362 840 C1362 880 1340 902 1310 902 C1295 902 1280 895 1270 890 L1040 745 C985 710 955 620 955 560Z"/>
        <path fill="url(#pin1)" d="M1010 612 C1010 593 1018 583 1032 583 C1058 583 1077 615 1077 650 C1077 672 1070 683 1057 683 C1030 680 1010 645 1010 612Z"/>
        <path fill="url(#pin2)" d="M1240 755 C1240 736 1248 727 1262 727 C1288 727 1307 758 1307 790 C1307 812 1300 821 1287 821 C1260 818 1240 788 1240 755Z"/>
      </g>
      <circle cx="194" cy="145.500" r="5.200" fill="#fff" stroke="#1b1b28" stroke-width="2"/><circle cx="194" cy="145.500" r="2" fill="#333"/>
    </svg>`;
  }
}

@customElement("view-cube")
export class ViewCube extends LitElement {
  static styles = css`
    :host { display: block; }
    svg { display: block; font-family: Roboto, sans-serif; }
    .soft { fill: #e0e6ed; }
    .face { fill: #fff; }
    .label { font-size: 40px; font-weight: 500; fill: #333; text-anchor: middle; }
    .axis { font-size: 48px; font-weight: 500; text-anchor: middle; }
    .z { fill: #3a36d8; } .x { fill: #e02a2a; } .y { fill: #8fd79a; }
  `;
  render() {
    return html`<svg width="230" height="220" viewBox="0 0 690 660" role="img" aria-label="View cube">
      <g class="soft">
        <path d="M352 47 L379 83 H325Z M352 610 L379 574 H325Z M71 328 L108 300 V356Z M633 328 L597 300 V356Z"/>
        <path d="M272 78 L277 99 C235 110 205 130 183 152 L192 171 L152 174 L154 132 L168 142 C195 112 230 88 272 78Z"/>
        <path d="M434 78 L429 99 C471 110 501 130 523 152 L514 171 L554 174 L552 132 L538 142 C511 112 476 88 434 78Z"/>
        <path d="M318 168 C340 160 366 160 388 168 L484 215 C500 224 506 234 506 250 V395 C506 408 500 420 486 428 L385 484 C362 497 342 497 320 484 L222 428 C206 418 202 408 202 395 V250 C202 234 206 224 220 215Z"/>
      </g>
      <path class="face" d="M335 184 C345 180 362 180 372 184 L443 220 C453 228 453 236 443 243 L375 284 C360 294 345 294 330 284 L262 243 C253 236 253 228 262 220Z"/>
      <path class="face" d="M217 300 C217 288 225 284 236 290 L312 330 C326 338 332 350 332 366 V450 C332 462 326 466 314 460 L235 415 C222 407 217 398 217 385Z"/>
      <path class="face" d="M489 300 C489 288 481 284 470 290 L394 330 C380 338 374 350 374 366 V450 C374 462 380 466 392 460 L471 415 C484 407 489 398 489 385Z"/>
      <circle class="face" cx="353" cy="328" r="27"/><ellipse class="face" cx="352" cy="474" rx="27" ry="9"/>
      <ellipse class="face" cx="228" cy="256" rx="12" ry="26" transform="rotate(25 228 256)"/><ellipse class="face" cx="480" cy="256" rx="12" ry="26" transform="rotate(-25 480 256)"/>
      <path d="M353 158 V184 M478 402 L512 405" stroke="#fff" stroke-width="9"/>
      <text class="label" transform="translate(348 248) rotate(34)">Top</text>
      <text class="label" transform="translate(273 385) skewY(25)">Front</text>
      <text class="label" transform="translate(432 384) skewY(-25)">Right</text>
      <path d="M191 240 V420" stroke="#4a46d0" stroke-width="4"/><path d="M191 422 L347 512" stroke="#d83232" stroke-width="4"/>
      <path d="M191 422 L347 332" stroke="#8fd79a" stroke-width="3"/><path d="M191 422 L225 402" stroke="#2f8f3d" stroke-width="5"/>
      <text class="axis z" x="190" y="226">Z</text><text class="axis x" x="373" y="541">X</text><text class="axis y" x="372" y="327">Y</text>
    </svg>`;
  }
}

interface Feature { icon: string; label: string; dim?: boolean; }

const TOOLS: string[][] = [
  ["extrude", "revolve", "sweep", "loft", "thicken", "v"],
  ["fillet", "v", "chamfer", "draft", "v", "rib", "shell", "hole", "thread"],
  ["pattern", "v", "mirror"],
  ["boolean", "split", "transform", "v", "deletePart"],
  ["modFillet", "deleteFace", "moveFace", "replaceFace"],
  ["plane", "v"],
  ["frame", "v"],
  ["sheet", "v"],
  ["custom"],
];

const GEOMETRY: Feature[] = [
  { icon: "origin", label: "Origin" },
  { icon: "planeDim", label: "Top", dim: true },
  { icon: "planeDim", label: "Front", dim: true },
  { icon: "planeDim", label: "Right", dim: true },
];

const FEATURES: Feature[] = [
  { icon: "sketchDim", label: "Sketch 1", dim: true },
  { icon: "extrude", label: "Extrude 1" },
  { icon: "extrude", label: "Extrude 2" },
  { icon: "planeDim", label: "Plane 1", dim: true },
  { icon: "sketchDim", label: "Sketch 2", dim: true },
  { icon: "extrude", label: "Extrude 4" },
  { icon: "planeDim", label: "Plane 2", dim: true },
  { icon: "sketchDim", label: "", dim: true },
];

@customElement("app-root")
export class AppRoot extends LitElement {
  static styles = css`
    :host {
      display: flex; flex-direction: column; height: 100vh; overflow: hidden; box-sizing: border-box;
      border-top: 2px solid #2d2b33; background: #fff; color: #333;
      font: 17px/20px Roboto, sans-serif;
    }
    * { box-sizing: border-box; }
    button { font: inherit; color: inherit; background: none; border: 0; padding: 0; margin: 0; display: inline-flex; align-items: center; justify-content: center; }
    a { color: inherit; text-decoration: none; }
    ul { list-style: none; margin: 0; padding: 0; }
    h1, h2 { margin: 0; }

    .header { height: 50px; flex: none; display: flex; align-items: center; background: #fafafa; padding: 2px 6px 0 6px; }
    .brand { display: flex; align-items: center; gap: 8px; }
    .brand-name { font: 300 23px/28px Lato, sans-serif; color: #555; padding-bottom: 2px; width: 86px; }
    .menu { margin: 0 14px; }
    .title { font-size: 28px; line-height: 32px; font-weight: 700; white-space: nowrap; }
    .branch { font-size: 19px; color: #999; margin: 6px 14px 0 15px; }
    .crumb { position: relative; display: flex; align-items: center; gap: 6px; margin-left: 10px; font-size: 19px; color: #888; }
    .tooltip { position: absolute; z-index: 2; top: 30px; left: 23px; height: 34px; padding: 0 5px; display: flex; align-items: center; white-space: nowrap;
      background: rgba(213, 219, 231, 0.8); color: #666; font-size: 15px; font-weight: 700; }
    .stats { display: flex; align-items: center; margin-left: 80px; gap: 18px; }
    .globe { margin-right: 10px; }
    .stat { display: flex; align-items: center; gap: 8px; }
    .account { margin-left: auto; display: flex; align-items: center; }
    .bell { position: relative; margin-right: 14px; padding-top: 6px; }
    .badge { position: absolute; top: -8px; left: 12px; width: 20px; height: 20px; border-radius: 3px; background: #164fae; color: #fff; font-size: 12px; line-height: 20px; font-weight: 700; text-align: center; }
    .head { margin: 0 12px 0 16px; }
    .share { width: 74px; height: 42px; border-radius: 5px; background: #1750b0; color: #fff; font-size: 18px; margin: 0 12px 4px 0; }
    .caret { margin: 0 14px 0 10px; }
    .avatar { width: 30px; height: 28px; }
    .user { gap: 7px; }
    .user cad-icon { margin-left: 3px; }

    .body { flex: 1; min-height: 0; display: grid; grid-template-columns: 50px 1fr; }
    .rail { background: #fafafa; border-right: 1px solid #ccc; border-top: 1px solid #ccc; display: flex; flex-direction: column; align-items: center; padding-top: 10px; gap: 20px; }
    .rail button { margin-right: 1px; }
    .main { display: flex; flex-direction: column; min-width: 0; min-height: 0; }
    .toolbar { height: 45px; flex: none; display: flex; align-items: center; padding-left: 9px; }
    .group { display: flex; align-items: center; flex: none; }
    .tool { width: 43px; height: 40px; }
    .undo { margin-right: 1px; width: 24px; }
    .redo { margin: 0 12px 0 18px; width: 24px; }
    .drop { width: 19px; height: 40px; margin-right: 3px; }
    .group.snug .drop { margin-right: 2px; }
    .sep { width: 2px; height: 33px; background: #d4d4d4; margin: 0 1px; flex: none; }
    .sketch { gap: 5px; margin: 0 15px 0 9px; }
    .search { margin-left: 15px; padding: 0 10px 0 12px; height: 39px; background: #ececec; border-radius: 4px; white-space: nowrap; }
    .keys { display: flex; margin-left: 5px; }
    kbd { font: 15px/22px Roboto, "DejaVu Sans", sans-serif; border: 1px solid #999; border-radius: 3px; height: 24px; padding: 0 3px; }
    kbd + kbd { padding: 0 5px; }

    .work { flex: 1; min-height: 0; display: grid; grid-template-columns: 258px 1fr; position: relative; }
    .panel { border: solid #ccc; border-width: 1px 2px 2px 0; display: flex; flex-direction: column; min-height: 0; }
    .filter { display: flex; align-items: center; gap: 14px; padding: 9px 10px 0 11px; flex: none; }
    .filter input { flex: 1; min-width: 0; height: 37px; border: 1px solid #999; border-radius: 4px; padding: 0 7px; font: italic 17px/20px Roboto, sans-serif; color: #333; background: #fff; }
    .filter input::placeholder { color: #666; opacity: 1; }
    .features-head { height: 38px; flex: none; display: flex; align-items: center; padding: 3px 25px 0 5px; }
    .features-head h2 { font-size: 16px; line-height: 20px; font-weight: 700; flex: 1; }
    .actions { display: flex; gap: 14px; }
    .list { height: 401px; flex: none; overflow: hidden; margin-right: 6px; border-bottom: 1px solid #ccc; }
    .row { display: flex; align-items: center; height: 32px; gap: 6px; padding-left: 7px; }
    .row.tall { height: 33px; }
    .row.dim { color: #999; }
    .row.head-row { padding-left: 4px; gap: 8px; margin: 0; }
    .children { margin-left: 11px; border-left: 2px solid #d0d0d0; position: relative; }
    .children::after { content: ""; position: absolute; left: -7px; bottom: 0; width: 12px; height: 1px; background: #ccc; }
    .children .row { padding-left: 18px; }
    .parts .child { padding-left: 31px; }

    .viewport { position: relative; overflow: hidden; min-width: 0; }
    .model { position: absolute; left: 442px; top: 173px; }
    .cube { position: absolute; right: 0; top: 3px; }
    .display { position: absolute; right: 24px; top: 183px; gap: 9px; }
    .flyout { position: absolute; left: -1px; top: 341px; width: 41px; height: 43px; border: 1px solid #999; border-left: 0; background: #fff; }
    .tables { position: absolute; right: 0; top: 279px; width: 40px; border: 1px solid #999; border-right: 0; background: #fff; display: flex; flex-direction: column; }
    .tables button { height: 41px; }
    .tables button + button { border-top: 1px solid #999; }
    .measure { position: absolute; right: 12px; bottom: 5px; display: flex; gap: 20px; }

    .tabs { height: 4px; flex: none; display: grid; grid-template-columns: 49px 250px 252px 253px 1fr; }
    .tabs .edge { background: #d5d5d5; }
    .tabs .tab { background: #e9e9e9; border-left: 2px solid #d0d0d0; }
  `;

  private row(f: Feature, i: number, tallFirst: boolean) {
    const tall = (i % 2 === 0) === tallFirst;
    return html`<li class=${classMap({ row: true, tall, dim: !!f.dim })}><cad-icon name=${f.icon} size="19"></cad-icon>${f.label}</li>`;
  }

  private tool(name: string) {
    return name === "v"
      ? html`<button class="drop" aria-label="More options"><cad-icon name="chevron" size="19"></cad-icon></button>`
      : html`<button class="tool" aria-label=${name}><cad-icon name=${name}></cad-icon></button>`;
  }

  render() {
    return html`
      <header class="header">
        <a class="brand" href="#" aria-label="Onshape">
          <svg width="26" height="28" viewBox="0 0 26 28" aria-hidden="true">
            <path d="M13 1 L24 7.500 V20.500 L13 27 L2 20.500 V7.500Z" fill="#5fb348"/>
            <path d="M13 6 L20 10 V18.500 L13 22.500 L6 18.500 V10Z" fill="#fafafa"/>
            <path d="M17 0 L15 7 M1 21 L8 17 M25 20 L18 15" stroke="#fafafa" stroke-width="1.500"/>
            <path d="M13 8.500 L18 11.300 V17 L13 20 L8 17 V11.300Z" fill="none" stroke="#555" stroke-width="1.500"/>
            <path d="M13 11.500 L15.500 13 V15.700 L13 17.200 L10.500 15.700 V13Z" fill="#fff" stroke="#777"/>
          </svg>
          <span class="brand-name">onshape</span>
        </a>
        <button class="menu" aria-label="Menu"><cad-icon name="menu" size="23"></cad-icon></button>
        <h1 class="title">Lever Arm Assembly 01</h1>
        <span class="branch">Main</span>
        <button aria-label="Copy link"><cad-icon name="link" size="20"></cad-icon></button>
        <a class="crumb" href="#"><cad-icon name="folder"></cad-icon>Portfolio<span class="tooltip" role="tooltip">Go to Portfolio</span></a>
        <div class="stats">
          <cad-icon class="globe" name="globe"></cad-icon>
          <span class="stat"><cad-icon name="copies"></cad-icon>0</span>
          <span class="stat"><cad-icon name="version"></cad-icon>0</span>
          <span class="stat"><cad-icon name="thumb"></cad-icon>0</span>
        </div>
        <div class="account">
          <button class="bell" aria-label="Notifications"><cad-icon name="bell" size="23"></cad-icon><span class="badge">6</span></button>
          <button aria-label="Apps"><cad-icon name="apps"></cad-icon></button>
          <button class="head" aria-label="Learning"><cad-icon name="head"></cad-icon></button>
          <button class="share">Share</button>
          <button aria-label="Help"><cad-icon name="help"></cad-icon><cad-icon class="caret" name="caret" size="11"></cad-icon></button>
          <button class="user">
            <svg class="avatar" viewBox="0 0 30 28" aria-hidden="true"><path d="M0 28 V15 C0 6 6 0 15 0 C24 0 30 6 30 15 V28Z" fill="#164fae"/><ellipse cx="15" cy="13" rx="7.500" ry="8.500" fill="#fff"/><path d="M3 28 C4 23 9 21.500 11.500 20.500 V17 H18.500 V20.500 C21 21.500 26 23 27 28Z" fill="#fff"/></svg>
            <span>Vivekcasi</span><cad-icon name="caret" size="11"></cad-icon>
          </button>
        </div>
      </header>
      <div class="body">
        <nav class="rail" aria-label="Document panels">
          ${["tree", "versionAdd", "comment", "notes", "boxLock", "stopwatchFast"].map((n) => html`<button aria-label=${n}><cad-icon name=${n}></cad-icon></button>`)}
        </nav>
        <div class="main">
          <div class="toolbar" role="toolbar">
            <button class="undo" aria-label="Undo"><cad-icon name="undo"></cad-icon></button>
            <button class="redo" aria-label="Redo"><cad-icon name="redo"></cad-icon></button>
            <span class="sep"></span>
            <button class="sketch"><cad-icon name="sketch"></cad-icon>Sketch</button>
            ${TOOLS.map((g, i) => html`<span class="sep"></span><div class=${classMap({ group: true, snug: i === 1 })}>${g.map((t) => this.tool(t))}</div>`)}
            <button class="search">Search tools...<span class="keys"><kbd>alt/⌥</kbd><kbd>c</kbd></span></button>
          </div>
          <div class="work">
            <aside class="panel">
              <label class="filter"><cad-icon name="funnel"></cad-icon><input type="text" aria-label="Filter" placeholder="Filter by name or type"></label>
              <div class="features-head">
                <h2>Features (31)</h2>
                <div class="actions">
                  <button aria-label="New folder"><cad-icon name="folderAdd"></cad-icon></button>
                  <button aria-label="Pause"><cad-icon name="pause" size="23"></cad-icon></button>
                  <button aria-label="Regeneration times"><cad-icon name="stopwatch"></cad-icon></button>
                </div>
              </div>
              <div class="list">
                <div class="row head-row"><cad-icon name="expand" size="17"></cad-icon>Default geometry</div>
                <ul class="children">${GEOMETRY.map((f, i) => this.row(f, i, false))}</ul>
                <ul>${FEATURES.map((f, i) => this.row(f, i, true))}</ul>
              </div>
              <div class="parts">
                <div class="row head-row"><cad-icon name="expand" size="17"></cad-icon>Parts (1)</div>
                <div class="row tall child"><cad-icon name="part" size="19"></cad-icon>Part 1</div>
              </div>
            </aside>
            <section class="viewport">
              <part-model class="model"></part-model>
              <view-cube class="cube"></view-cube>
              <button class="display" aria-label="Display style"><cad-icon name="shaded"></cad-icon><cad-icon name="caret" size="11"></cad-icon></button>
              <button class="flyout" aria-label="Show list"><cad-icon name="flyout"></cad-icon></button>
              <div class="tables">
                ${["appearance", "tableBlue", "tableBrace", "tableVar"].map((n) => html`<button aria-label=${n}><cad-icon name=${n}></cad-icon></button>`)}
              </div>
              <div class="measure">
                ${["tape", "protractor", "scales"].map((n) => html`<button aria-label=${n}><cad-icon name=${n}></cad-icon></button>`)}
              </div>
            </section>
          </div>
          <div class="tabs"><span class="edge"></span><span></span><span class="tab"></span><span class="tab"></span><span class="edge"></span></div>
        </div>
      </div>
    `;
  }
}
